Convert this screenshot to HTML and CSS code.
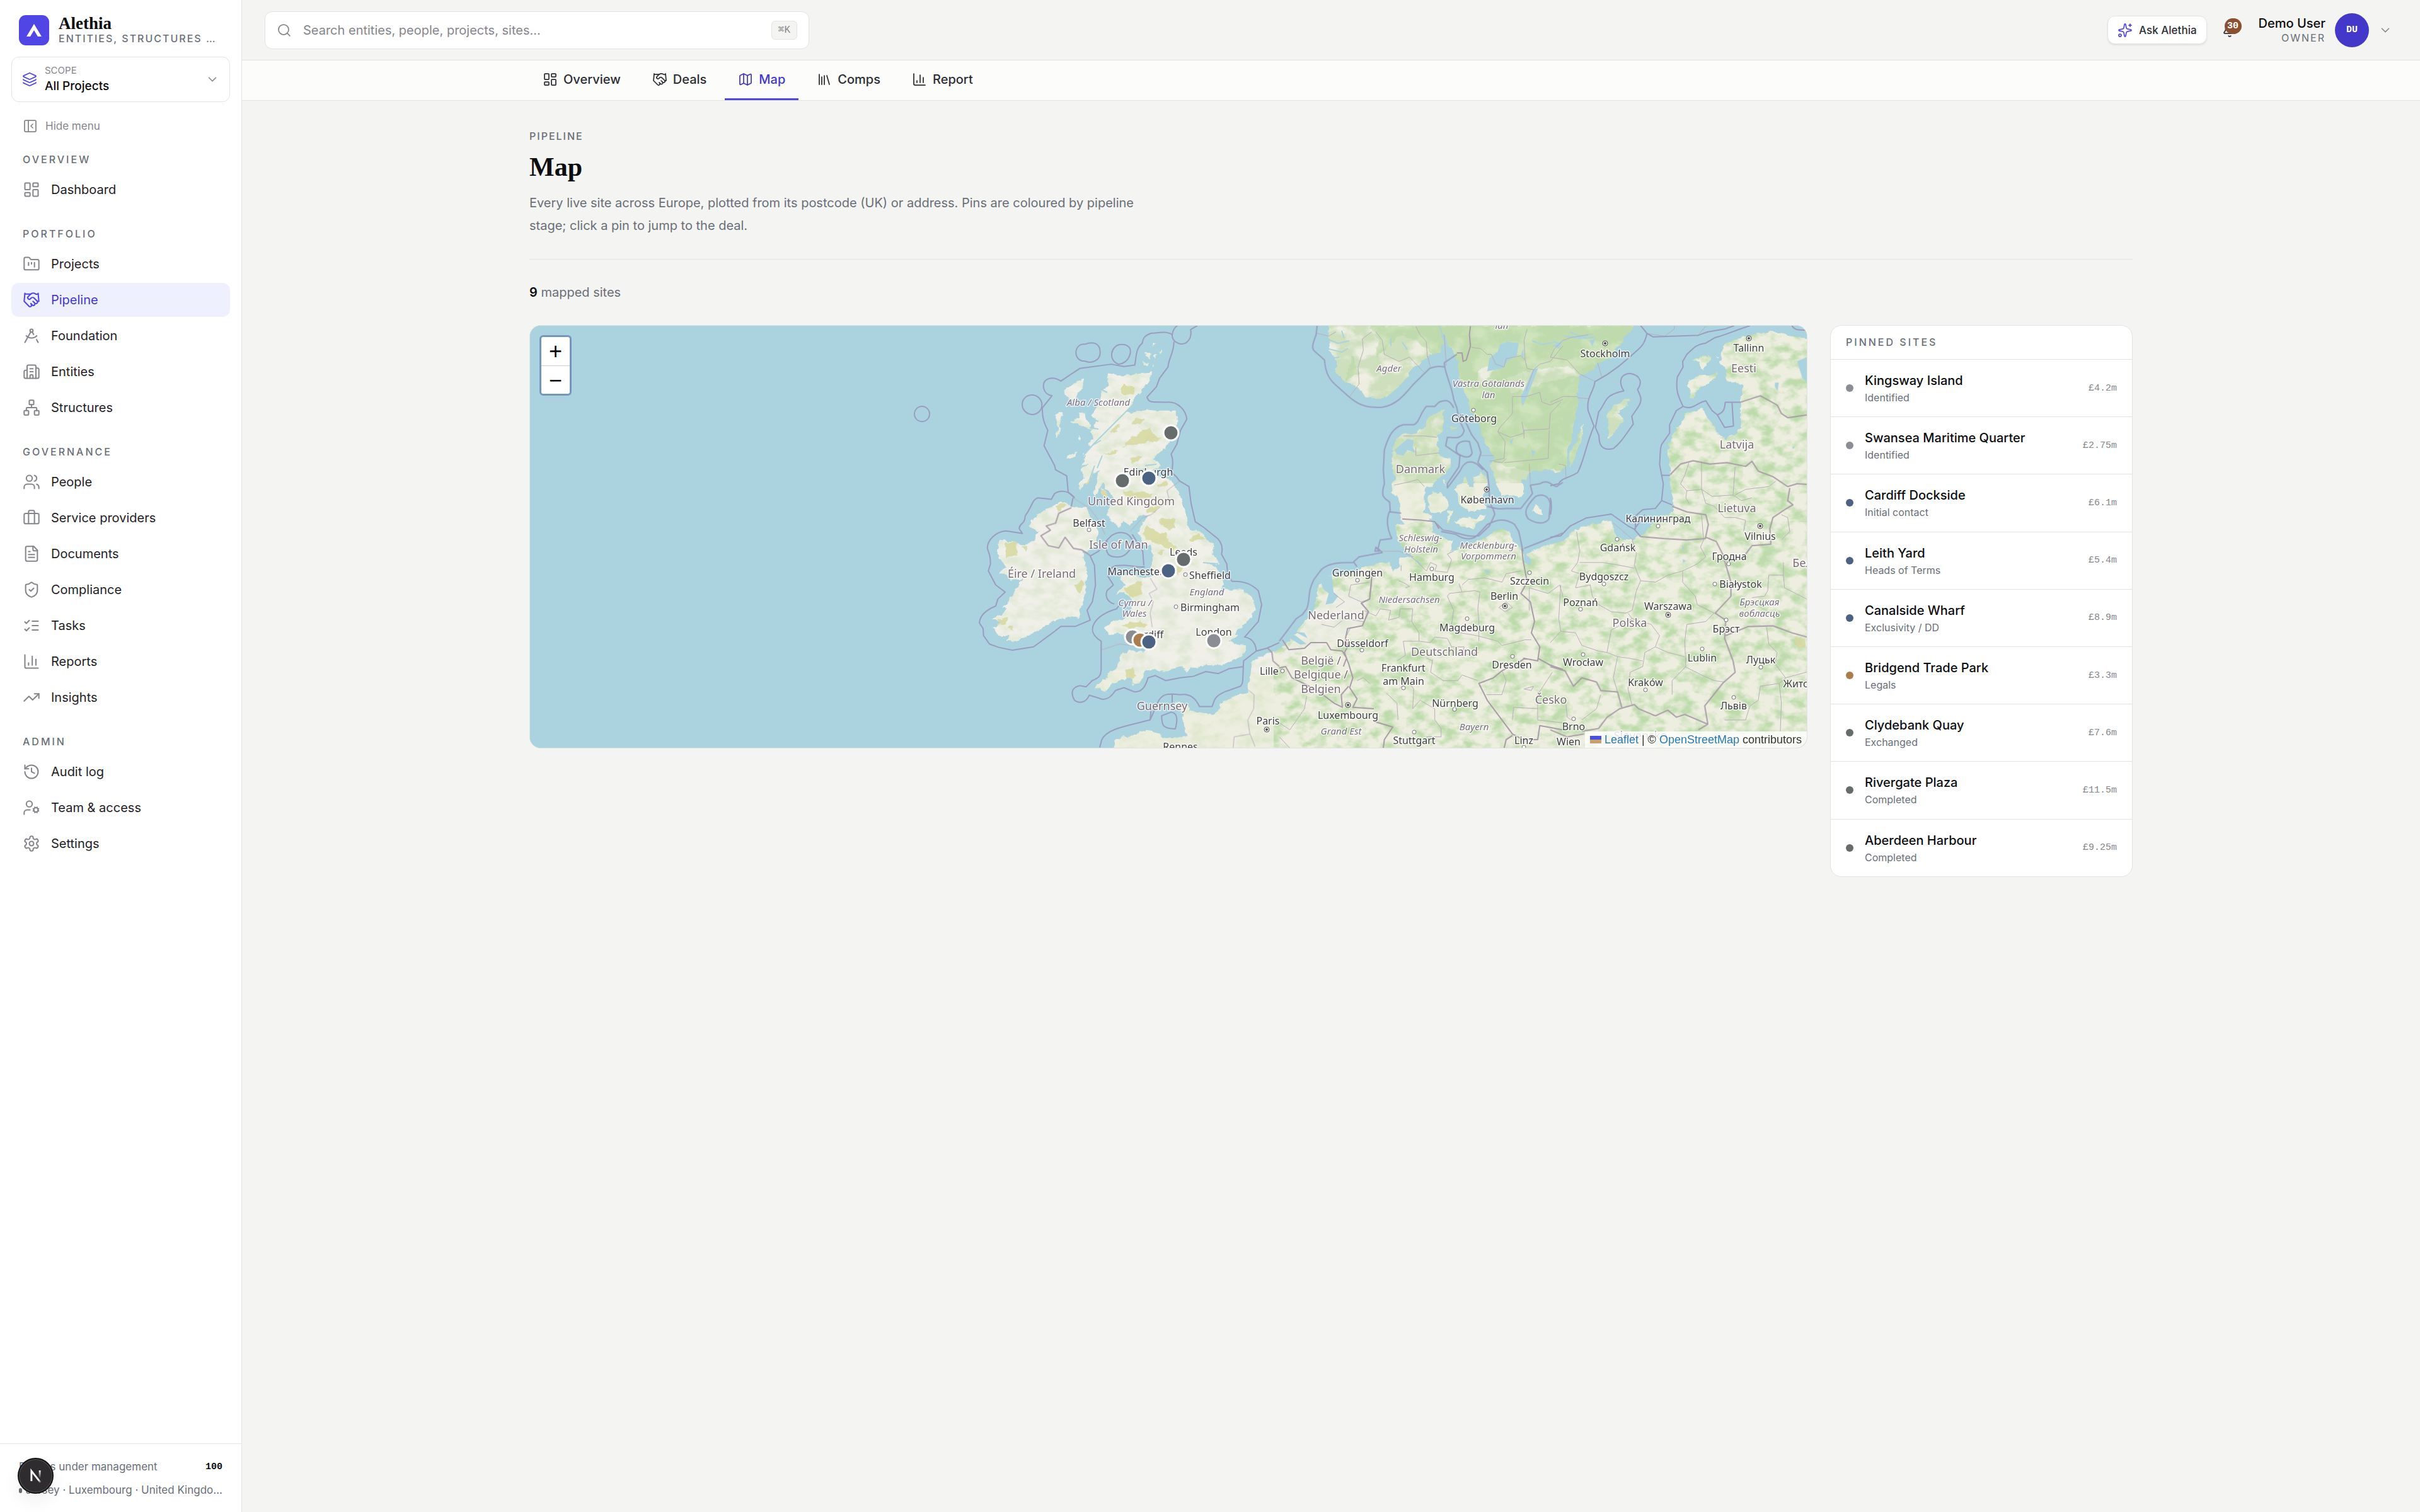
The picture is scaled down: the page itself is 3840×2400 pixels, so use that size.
FILE: index.html
```html
<!DOCTYPE html>
<html lang="en">
<head>
  <meta charset="UTF-8">
  <meta name="viewport" content="width=device-width, initial-scale=1">
  <title>Alethia</title>
  <link rel="stylesheet" href="styles.css">
</head>
<body>
  <!-- icon sprite -->
  <svg class="sprite" aria-hidden="true">
    <symbol id="i-dashboard" viewBox="0 0 24 24"><rect width="7" height="9" x="3" y="3" rx="1"/><rect width="7" height="5" x="14" y="3" rx="1"/><rect width="7" height="9" x="14" y="12" rx="1"/><rect width="7" height="5" x="3" y="16" rx="1"/></symbol>
    <symbol id="i-folder" viewBox="0 0 24 24"><path d="M4 20h16a2 2 0 0 0 2-2V8a2 2 0 0 0-2-2h-7.93a2 2 0 0 1-1.66-.9l-.82-1.2A2 2 0 0 0 7.93 3H4a2 2 0 0 0-2 2v13c0 1.1.9 2 2 2Z"/><path d="M8 10v4M12 10v2M16 10v6"/></symbol>
    <symbol id="i-handshake" viewBox="0 0 24 24"><path d="m11 17 2 2a1 1 0 1 0 3-3"/><path d="m14 14 2.5 2.5a1 1 0 1 0 3-3l-3.88-3.88a3 3 0 0 0-4.24 0l-.88.88a1 1 0 1 1-3-3l2.81-2.81a5.79 5.79 0 0 1 7.06-.87l.47.28a2 2 0 0 0 1.42.25L21 4"/><path d="m21 3 1 11h-2"/><path d="M3 3 2 14l6.5 6.5a1 1 0 1 0 3-3"/><path d="M3 4h8"/></symbol>
    <symbol id="i-compass" viewBox="0 0 24 24"><path d="m12.99 6.74 1.93 3.44"/><path d="M19.136 12a10 10 0 0 1-14.271 0"/><path d="m21 21-2.16-3.84"/><path d="m3 21 8.02-14.26"/><circle cx="12" cy="5" r="2"/></symbol>
    <symbol id="i-building" viewBox="0 0 24 24"><path d="M10 12h4M10 8h4"/><path d="M14 21v-3a2 2 0 0 0-4 0v3"/><path d="M6 10H4a2 2 0 0 0-2 2v7a2 2 0 0 0 2 2h16a2 2 0 0 0 2-2V9a2 2 0 0 0-2-2h-2"/><path d="M6 21V5a2 2 0 0 1 2-2h8a2 2 0 0 1 2 2v16"/></symbol>
    <symbol id="i-network" viewBox="0 0 24 24"><rect x="16" y="16" width="6" height="6" rx="1"/><rect x="2" y="16" width="6" height="6" rx="1"/><rect x="9" y="2" width="6" height="6" rx="1"/><path d="M5 16v-3a1 1 0 0 1 1-1h12a1 1 0 0 1 1 1v3M12 12V8"/></symbol>
    <symbol id="i-users" viewBox="0 0 24 24"><path d="M16 21v-2a4 4 0 0 0-4-4H6a4 4 0 0 0-4 4v2"/><path d="M16 3.128a4 4 0 0 1 0 7.744"/><path d="M22 21v-2a4 4 0 0 0-3-3.87"/><circle cx="9" cy="7" r="4"/></symbol>
    <symbol id="i-briefcase" viewBox="0 0 24 24"><path d="M16 20V4a2 2 0 0 0-2-2h-4a2 2 0 0 0-2 2v16"/><rect width="20" height="14" x="2" y="6" rx="2"/></symbol>
    <symbol id="i-file" viewBox="0 0 24 24"><path d="M15 2H6a2 2 0 0 0-2 2v16a2 2 0 0 0 2 2h12a2 2 0 0 0 2-2V7Z"/><path d="M14 2v4a2 2 0 0 0 2 2h4"/><path d="M10 9H8M16 13H8M16 17H8"/></symbol>
    <symbol id="i-shield" viewBox="0 0 24 24"><path d="M20 13c0 5-3.5 7.5-7.66 8.95a1 1 0 0 1-.67-.01C7.5 20.5 4 18 4 13V6a1 1 0 0 1 1-1c2 0 4.5-1.2 6.24-2.72a1.17 1.17 0 0 1 1.52 0C14.51 3.81 17 5 19 5a1 1 0 0 1 1 1z"/><path d="m9 12 2 2 4-4"/></symbol>
    <symbol id="i-tasks" viewBox="0 0 24 24"><path d="m3 17 2 2 4-4M3 7l2 2 4-4M13 6h8M13 12h8M13 18h8"/></symbol>
    <symbol id="i-chart" viewBox="0 0 24 24"><path d="M3 3v16a2 2 0 0 0 2 2h16M18 17V9M13 17V5M8 17v-3"/></symbol>
    <symbol id="i-trend" viewBox="0 0 24 24"><path d="M16 7h6v6"/><path d="m22 7-8.5 8.5-5-5L2 17"/></symbol>
    <symbol id="i-history" viewBox="0 0 24 24"><path d="M3 12a9 9 0 1 0 9-9 9.75 9.75 0 0 0-6.74 2.74L3 8"/><path d="M3 3v5h5M12 7v5l4 2"/></symbol>
    <symbol id="i-usercog" viewBox="0 0 24 24"><path d="M10 15H6a4 4 0 0 0-4 4v2"/><path d="m14.305 16.53.923-.382M15.228 13.852l-.923-.383M16.852 12.228l-.383-.923M16.852 17.772l-.383.924M19.148 12.228l.383-.923M19.53 18.696l-.382-.924M20.772 13.852l.924-.383M20.772 16.148l.924.383"/><circle cx="18" cy="15" r="3"/><circle cx="9" cy="7" r="4"/></symbol>
    <symbol id="i-settings" viewBox="0 0 24 24"><path d="M12.22 2h-.44a2 2 0 0 0-2 2v.18a2 2 0 0 1-1 1.73l-.43.25a2 2 0 0 1-2 0l-.15-.08a2 2 0 0 0-2.73.73l-.22.38a2 2 0 0 0 .73 2.73l.15.1a2 2 0 0 1 1 1.72v.51a2 2 0 0 1-1 1.74l-.15.09a2 2 0 0 0-.73 2.73l.22.38a2 2 0 0 0 2.73.73l.15-.08a2 2 0 0 1 2 0l.43.25a2 2 0 0 1 1 1.73V20a2 2 0 0 0 2 2h.44a2 2 0 0 0 2-2v-.18a2 2 0 0 1 1-1.73l.43-.25a2 2 0 0 1 2 0l.15.08a2 2 0 0 0 2.73-.73l.22-.39a2 2 0 0 0-.73-2.73l-.15-.08a2 2 0 0 1-1-1.74v-.5a2 2 0 0 1 1-1.74l.15-.09a2 2 0 0 0 .73-2.73l-.22-.38a2 2 0 0 0-2.73-.73l-.15.08a2 2 0 0 1-2 0l-.43-.25a2 2 0 0 1-1-1.73V4a2 2 0 0 0-2-2z"/><circle cx="12" cy="12" r="3"/></symbol>
    <symbol id="i-layers" viewBox="0 0 24 24"><path d="M12.83 2.18a2 2 0 0 0-1.66 0L2.6 6.08a1 1 0 0 0 0 1.83l8.58 3.91a2 2 0 0 0 1.66 0l8.58-3.9a1 1 0 0 0 0-1.83z"/><path d="M2 12a1 1 0 0 0 .58.91l8.6 3.91a2 2 0 0 0 1.65 0l8.58-3.9A1 1 0 0 0 22 12"/><path d="M2 17a1 1 0 0 0 .58.91l8.6 3.91a2 2 0 0 0 1.65 0l8.58-3.9A1 1 0 0 0 22 17"/></symbol>
    <symbol id="i-panel" viewBox="0 0 24 24"><rect width="18" height="18" x="3" y="3" rx="2"/><path d="M9 3v18M16 15l-3-3 3-3"/></symbol>
    <symbol id="i-map" viewBox="0 0 24 24"><path d="M14.106 5.553a2 2 0 0 0 1.788 0l3.659-1.83A1 1 0 0 1 21 4.619v12.764a1 1 0 0 1-.553.894l-4.553 2.277a2 2 0 0 1-1.788 0l-4.212-2.106a2 2 0 0 0-1.788 0l-3.659 1.83A1 1 0 0 1 3 19.381V6.618a1 1 0 0 1 .553-.894l4.553-2.277a2 2 0 0 1 1.788 0z"/><path d="M15 5.764v15M9 3.236v15"/></symbol>
    <symbol id="i-library" viewBox="0 0 24 24"><path d="m16 6 4 14M12 6v14M8 8v12M4 4v16"/></symbol>
    <symbol id="i-search" viewBox="0 0 24 24"><path d="m21 21-4.34-4.34"/><circle cx="11" cy="11" r="8"/></symbol>
    <symbol id="i-sparkles" viewBox="0 0 24 24"><path d="M11.017 2.814a1 1 0 0 1 1.966 0l1.051 5.558a2 2 0 0 0 1.594 1.594l5.558 1.051a1 1 0 0 1 0 1.966l-5.558 1.051a2 2 0 0 0-1.594 1.594l-1.051 5.558a1 1 0 0 1-1.966 0l-1.051-5.558a2 2 0 0 0-1.594-1.594l-5.558-1.051a1 1 0 0 1 0-1.966l5.558-1.051a2 2 0 0 0 1.594-1.594z"/><path d="M20 2v4M22 4h-4"/><circle cx="4" cy="20" r="2"/></symbol>
    <symbol id="i-bell" viewBox="0 0 24 24"><path d="M10.268 21a2 2 0 0 0 3.464 0"/><path d="M3.262 15.326A1 1 0 0 0 4 17h16a1 1 0 0 0 .74-1.673C19.41 13.956 18 12.499 18 8A6 6 0 0 0 6 8c0 4.499-1.411 5.956-2.738 7.326"/></symbol>
    <symbol id="i-chevron" viewBox="0 0 24 24"><path d="m6 9 6 6 6-6"/></symbol>
  </svg>

  <div class="layout">
    <aside class="sidebar">
      <div class="brand">
        <svg class="brand-logo" viewBox="0 0 48 48"><rect width="48" height="48" rx="11"/><path d="M24 14 36 34h-6l-6-10-6 10h-6z"/></svg>
        <div class="brand-text">
          <div class="brand-name">Alethia</div>
          <div class="brand-sub">Entities, structures …</div>
        </div>
      </div>

      <button class="scope">
        <svg class="icon"><use href="#i-layers"/></svg>
        <span class="scope-text">
          <span class="scope-label">SCOPE</span>
          <span class="scope-value">All Projects</span>
        </span>
        <svg class="icon icon-sm"><use href="#i-chevron"/></svg>
      </button>

      <button class="hide-menu"><svg class="icon"><use href="#i-panel"/></svg>Hide menu</button>

      <nav class="nav">
        <section class="nav-group">
          <h2>Overview</h2>
          <a href="#"><svg class="icon"><use href="#i-dashboard"/></svg>Dashboard</a>
        </section>
        <section class="nav-group">
          <h2>Portfolio</h2>
          <a href="#"><svg class="icon"><use href="#i-folder"/></svg>Projects</a>
          <a href="#" class="active"><svg class="icon"><use href="#i-handshake"/></svg>Pipeline</a>
          <a href="#"><svg class="icon"><use href="#i-compass"/></svg>Foundation</a>
          <a href="#"><svg class="icon"><use href="#i-building"/></svg>Entities</a>
          <a href="#"><svg class="icon"><use href="#i-network"/></svg>Structures</a>
        </section>
        <section class="nav-group">
          <h2>Governance</h2>
          <a href="#"><svg class="icon"><use href="#i-users"/></svg>People</a>
          <a href="#"><svg class="icon"><use href="#i-briefcase"/></svg>Service providers</a>
          <a href="#"><svg class="icon"><use href="#i-file"/></svg>Documents</a>
          <a href="#"><svg class="icon"><use href="#i-shield"/></svg>Compliance</a>
          <a href="#"><svg class="icon"><use href="#i-tasks"/></svg>Tasks</a>
          <a href="#"><svg class="icon"><use href="#i-chart"/></svg>Reports</a>
          <a href="#"><svg class="icon"><use href="#i-trend"/></svg>Insights</a>
        </section>
        <section class="nav-group">
          <h2>Admin</h2>
          <a href="#"><svg class="icon"><use href="#i-history"/></svg>Audit log</a>
          <a href="#"><svg class="icon"><use href="#i-usercog"/></svg>Team &amp; access</a>
          <a href="#"><svg class="icon"><use href="#i-settings"/></svg>Settings</a>
        </section>
      </nav>

      <footer class="side-footer">
        <div class="stat"><span>Entities under management</span><b>100</b></div>
        <div class="places"><i></i>Jersey · Luxembourg · United Kingdo…</div>
      </footer>
    </aside>

    <div class="content">
      <header class="topbar">
        <label class="search">
          <svg class="icon"><use href="#i-search"/></svg>
          <input type="text" placeholder="Search entities, people, projects, sites…">
          <kbd>⌘K</kbd>
        </label>
        <div class="top-right">
          <button class="ask"><svg class="icon"><use href="#i-sparkles"/></svg>Ask Alethia</button>
          <button class="bell"><svg class="icon"><use href="#i-bell"/></svg><span class="count">30</span></button>
          <button class="account">
            <span class="who"><span class="who-name">Demo User</span><span class="who-role">OWNER</span></span>
            <span class="avatar">DU</span>
            <svg class="icon icon-sm"><use href="#i-chevron"/></svg>
          </button>
        </div>
      </header>

      <nav class="tabs">
        <div class="tabs-inner">
          <a href="#"><svg class="icon"><use href="#i-dashboard"/></svg>Overview</a>
          <a href="#"><svg class="icon"><use href="#i-handshake"/></svg>Deals</a>
          <a href="#" class="active"><svg class="icon"><use href="#i-map"/></svg>Map</a>
          <a href="#"><svg class="icon"><use href="#i-library"/></svg>Comps</a>
          <a href="#"><svg class="icon"><use href="#i-chart"/></svg>Report</a>
        </div>
      </nav>

      <main class="page">
        <div class="page-head">
          <p class="eyebrow">Pipeline</p>
          <h1>Map</h1>
          <p class="lead">Every live site across Europe, plotted from its postcode (UK) or address. Pins are coloured by pipeline stage; click a pin to jump to the deal.</p>
        </div>
        <p class="mapped"><b>9</b> mapped sites</p>

        <div class="board">
          <div class="map">
            <svg class="map-canvas" viewBox="0 0 2026 670" preserveAspectRatio="xMinYMin slice">
              <defs>
                <!-- woodland mottling -->
                <filter id="wood" x="0" y="0" width="100%" height="100%" color-interpolation-filters="sRGB">
                  <feTurbulence type="fractalNoise" baseFrequency="0.04 0.06" numOctaves="5" seed="8"/>
                  <feColorMatrix values="0 0 0 0 .74  0 0 0 0 .86  0 0 0 0 .67  0 3 0 0 -1.2"/>
                </filter>
                <filter id="wood-dense" x="0" y="0" width="100%" height="100%" color-interpolation-filters="sRGB">
                  <feTurbulence type="fractalNoise" baseFrequency="0.03 0.04" numOctaves="5" seed="3"/>
                  <feColorMatrix values="0 0 0 0 .70  0 0 0 0 .83  0 0 0 0 .62  0 4 0 0 -1.2"/>
                </filter>
                <!-- coast wobble -->
                <filter id="rough" x="0" y="0" width="100%" height="100%">
                  <feTurbulence type="fractalNoise" baseFrequency="0.09" numOctaves="3" seed="5"/>
                  <feDisplacementMap in="SourceGraphic" scale="9" xChannelSelector="R" yChannelSelector="G"/>
                </filter>

                <g id="isles" transform="matrix(.3333 0 0 .4464 689 -17)">
                  <path d="M690 207 735 215 790 215 830 207 888 203 885 232 850 262 815 292 800 318 770 345 800 350 870 337 940 342 1005 342 1018 365 1005 400 985 440 955 475 915 500 895 515 915 522 940 535 925 550 880 548 800 545 880 560 930 575 985 585 1020 630 1040 665 1055 720 1075 762 1130 775 1180 815 1190 835 1185 855 1212 887 1150 880 1200 895 1230 925 1238 955 1215 985 1180 1000 1250 978 1320 978 1370 1000 1382 1040 1360 1085 1310 1115 1280 1135 1305 1140 1260 1160 1300 1170 1345 1175 1340 1200 1290 1225 1230 1245 1130 1250 1085 1255 1060 1270 1040 1250 950 1265 900 1260 865 1262 840 1305 810 1315 790 1295 750 1295 700 1315 670 1340 640 1330 620 1325 660 1300 700 1270 730 1250 745 1215 775 1195 850 1195 880 1170 850 1175 800 1165 760 1135 735 1130 690 1140 662 1112 690 1095 760 1080 790 1050 800 1015 760 990 718 993 770 960 745 945 740 925 800 925 880 935 900 925 890 890 900 860 885 825 850 815 833 775 850 735 885 715 830 715 790 745 755 735 735 755 705 740 680 715 690 690 720 660 700 640 665 600 640 620 625 650 615 640 630 590 650 545 610 570 550 625 540 605 570 580 555 545 600 530 555 535 580 505 560 500 600 470 585 455 620 440 600 415 620 395 620 370 600 350 640 320 650 290 665 265 690 255 675 235Z"/>
                  <path d="M565 225 570 250 540 285 520 305 490 300 475 265 510 250ZM470 345 455 390 460 420 440 435 445 390 432 350ZM545 345 575 355 610 405 570 400 510 375 545 365ZM545 430 562 436 555 447ZM540 485 520 505 488 512 510 492ZM585 560 610 562 590 600 572 590ZM650 615 672 618 675 645 655 640ZM862 130 890 135 885 158 865 150ZM852 165 875 168 870 182 855 176ZM900 145 915 140 912 155ZM893 98 905 105 898 112ZM925 130 942 125 935 140ZM895 170 905 175 898 186ZM735 800 755 795 745 815 728 822Z"/>
                  <path d="M455 665 500 680 580 685 600 720 640 770 635 800 600 835 560 840 575 880 585 930 582 985 555 1045 550 1075 490 1070 440 1085 380 1110 300 1140 240 1160 200 1158 215 1140 165 1140 135 1115 175 1095 130 1080 180 1065 205 1045 175 1045 215 1020 240 980 275 945 225 940 200 925 165 920 195 895 170 870 158 845 165 805 230 800 280 820 330 800 355 770 305 750 340 715 390 690Z"/>
                  <path d="M1530 1185 1440 1205 1370 1230 1360 1300 1345 1340 1280 1355 1215 1385 1220 1405 1180 1420 1110 1415 1075 1410 1070 1385 1010 1378 1040 1420 1050 1480 1060 1500 1000 1500 960 1505 930 1490 870 1475 800 1490 715 1515 715 1580 1530 1580Z"/>
                </g>
                <g id="west" transform="matrix(.3333 0 0 .4464 1189 -17)">
                  <path d="M-30 1200 45 1165 50 1150 110 1100 150 1065 175 1030 185 960 230 935 250 925 300 920 350 915 400 900 450 885 520 880 545 910 570 890 575 860 640 865 600 835 560 800 550 745 590 740 575 700 570 650 530 630 550 580 535 530 540 480 560 440 590 420 650 420 700 385 720 355 765 345 790 335 775 360 780 410 750 435 760 490 780 505 820 515 810 540 780 570 750 580 730 610 700 610 690 640 695 690 685 700 725 735 730 770 800 800 830 800 810 845 870 815 920 810 980 790 1060 760 1100 775 1110 800 1150 830 1165 850 1250 825 1360 803 1360 1580-30 1580Z"/>
                  <path d="M705 650 735 632 770 630 800 655 805 690 770 708 730 700 710 680ZM835 620 865 600 890 580 905 610 925 610 920 575 960 560 985 575 990 610 970 650 980 690 940 690 925 700 890 690 870 680 850 660ZM830 735 880 720 930 725 955 710 985 715 950 735 925 760 900 755 860 750ZM1210 675 1250 690 1245 712 1210 700ZM805 700 822 695 812 735 798 740ZM690 702 725 715 728 725 700 722ZM815 400 845 395 835 405 820 408ZM780 585 792 590 788 608Z"/>
                </g>
                <g id="nordic-west" transform="matrix(.3333 0 0 .4464 1189 -17)">
                  <path d="M232 20 240 120 270 155 270 200 300 230 380 265 410 290 480 295 530 280 580 245 640 190 700 150 765 130 780 100 775 70 790 70 800 110 830 135 850 165 855 210 890 290 915 340 940 380 975 440 1000 480 1025 510 1000 540 1020 570 1045 620 1060 640 1140 650 1165 635 1160 590 1200 555 1260 550 1320 560 1370 540 1370 20Z"/>
                </g>
                <g id="east" transform="matrix(.3333 0 0 .4464 1619 -17)">
                  <path d="M-10 820 60 805 120 765 200 740 290 732 305 770 320 795 390 800 440 780 470 760 500 735 490 720 560 710 585 690 585 650 570 610 570 560 560 500 570 450 605 400 650 350 720 333 750 365 780 400 830 440 880 425 908 400 905 310 920 250 880 240 840 235 835 190 810 170 820 110 870 90 960 70 1040 60 1110 65 1170 80 1290 85 1290 1580-10 1580Z"/>
                </g>
                <g id="nordic-east" transform="matrix(.3333 0 0 .4464 1619 -17)">
                  <path d="M-10 20 410 20 370 70 330 100 290 150 230 175 190 200 140 215 130 260 135 310 115 370 100 460 60 520 40 560 0 545-10 550ZM160 390 150 430 115 510 95 545 92 500 125 440ZM388 297 360 320 330 345 345 375 325 400 270 448 280 400 268 360 310 315ZM650 250 690 215 760 215 800 205 790 225 740 250 700 265 680 300 665 300 675 270ZM675 160 710 155 730 138 765 155 755 175 720 195 710 170ZM785 145 805 148 795 152Z"/>
                </g>
                <mask id="land-mask"><g fill="#fff" filter="url(#rough)"><use href="#isles"/><use href="#west"/><use href="#east"/><use href="#nordic-west"/><use href="#nordic-east"/></g></mask>
              </defs>

              <rect class="sea" width="4000" height="1400"/>
              <g mask="url(#land-mask)">
                <rect class="land" width="2026" height="670"/>
                <rect class="pasture" x="700" width="480" height="550"/>
                <rect x="700" width="480" height="670" filter="url(#wood)" opacity=".3"/>
                <rect x="1180" y="310" width="846" height="360" filter="url(#wood)"/>
                <rect x="1360" y="140" width="140" height="170" filter="url(#wood)" opacity=".3"/>
                <rect x="1790" width="236" height="312" filter="url(#wood)"/>
                <g filter="url(#rough)">
                  <path class="forest" d="M1310 0h460l-40 60-50 25-10 60-10 70-20 15h-60l-60-15-40-40-40-70-10-60-20-20-30-10-50 50-60 40-20-20z"/>
                  <path class="fell" d="M1262 0h70l14 20-6 56-22 10-14-40-10 46-22 20-16-40zM1548 84l40-14 60-6 20 14-50 10-60 20zM1505 70l26-10-8 20-18 14z"/>
                  <path class="farmland" d="M1270 420h60l-10 60-70 30-60 20z"/>
                </g>
                <rect x="1240" width="550" height="250" filter="url(#wood-dense)" opacity=".55"/>
                <!-- upland heath -->
                <g class="heath" filter="url(#rough)">
                  <g transform="translate(819 63) scale(.3333)">
                    <path d="M350 115 375 90 415 105 415 135 380 145 355 130ZM405 280 440 250 465 260 430 290ZM370 385 400 345 450 320 490 290 520 330 550 350 480 365 430 375ZM300 320 350 280 350 300 310 325ZM275 420 345 400 330 420ZM365 605 440 600 510 610 505 630 420 630 380 620ZM525 570 570 545 575 570 530 580ZM455 800 480 765 510 780 540 800 570 790 580 840 635 870 600 880 540 850 500 840ZM535 730 610 730 620 770 580 780 550 760ZM680 830 720 800 760 825 700 835ZM535 885 565 880 550 905ZM260 590 285 590 285 625 262 625ZM190 560 225 510 215 545 200 570ZM370 1060 450 1030 460 1090 400 1110ZM135 1050 170 1020 190 1040 160 1080ZM400 440 460 430 440 460 400 470ZM480 680 540 670 520 700 480 700ZM45 670 75 660 95 670 60 690ZM620 950 650 970 630 1000Z"/>
                  </g>
                  <path d="M755 344l20-4-4 24-16 4zM781 352l10-4-4 12zM944 548l14-6 4 14-12 8zM940 474l30-6 10 8-30 6zM742 466l18-4-4 12-14 2zM756 480l10-4 2 10zM2006 494l18 4-2 14-12-2z"/>
                </g>
              </g>

              <!-- lochs and fjords -->
              <g class="loch">
                <path d="M958 124 940 142 918 164 896 186 878 206M906 182l-14 8M886 146l16 6M888 162l14 2M895 118l14 4M896 222l-8 22M908 206l-8 20M900 98l16 8M976 222l18-2M1068 376l24 2"/>
                <path d="M1262 20l20 8 18-4M1264 36l24 6 10-6M1270 52l14-2M1288 8l4 12M1448 14l-6-16M1366 20v12M1384 26l8 12M1590 24l16 6 20-4 10 4M1650 10l24 10 16-2"/>
              </g>

              <!-- lakes and inland water -->
              <g class="water" transform="matrix(.3333 0 0 .4464 1189 -17)">
                <path d="M195 945 250 925 258 985 280 1000 255 1025 220 1030 235 990 210 975ZM1050 105 1085 95 1140 100 1130 145 1085 165 1060 190 990 200 1000 155 1040 130ZM1210 190 1232 190 1180 290 1158 325 1150 290 1175 250ZM548 480 580 460 610 440 640 445 635 470 650 490 610 480 590 500 560 495Z"/>
                <path d="M60 1130 130 1170 100 1172 50 1150ZM70 1125 135 1150 120 1130ZM820 840 840 815 850 835ZM1165 845 1200 870 1195 890 1165 880ZM650 865 680 890 662 885ZM1095 450 1115 435 1105 460ZM1200 480 1220 485 1205 505ZM895 580 910 600 930 590 920 610 905 612ZM1150 145 1160 120 1165 150ZM1260 300 1275 295 1270 305ZM975 905 1005 912 990 922Z"/>
              </g>
              <g class="water" transform="matrix(.3333 0 0 .4464 1619 -17)">
                <path d="M1175 165 1225 148 1225 240 1200 225ZM1070 240 1088 240 1082 270 1068 255ZM60 72 130 78 200 66 150 85 80 80ZM10 110 60 90 40 118ZM185 90 215 85 200 110ZM625 820 640 825 632 838ZM630 868 645 874 632 882ZM1150 470 1165 466 1158 476ZM920 745 930 765 922 760Z"/>
              </g>

              <!-- regional boundaries -->
              <g class="region" transform="matrix(.3333 0 0 .4464 689 -17)">
                <path d="M885 935 918 975 880 990 900 1020 885 1060 895 1110M655 1190 740 1170 850 1180M520 650 600 690 640 730 670 780M1025 590 965 625 975 655 890 710 850 720 790 770M1355 1335 1380 1350 1378 1400 1350 1440 1360 1490 1285 1500 1280 1540M1360 1490 1385 1535"/>
              </g>
              <g class="region" transform="matrix(.3333 0 0 .4464 1189 -17)">
                <path d="M180 65 235 75 270 60M335 290 380 245 375 185 400 125 395 85 440 60M460 60 490 90 500 140 570 165 620 150 690 205M705 145 720 185M705 150 700 95 670 70 650 40M785 70 795 180M915 115 960 120 990 140 1010 140 1030 175 1070 185 1080 155 1150 145 1170 160 1180 190 1210 195 1240 175 1290 165 1350 110M1170 160 1165 90 1180 50M1210 195 1175 270M1175 290 1110 290 1110 350 1050 400 1040 415 1100 435 1165 420 1155 380M1175 290 1240 275 1250 310 1290 320 1350 300M1040 415 1075 450 1070 510 1000 520M1165 440 1165 410 1285 405 1290 350 1340 310M1285 410 1280 510 1070 525M1190 530 1195 600M960 500 1020 500M1020 520 1060 525 1080 510"/>
                <path d="M545 605 610 595 660 585 690 610M590 430 690 430 750 435M650 470 650 500 760 490M485 840 570 840 640 860M630 860 660 880 700 910 720 880 750 890 740 910 800 915 820 870 800 850 830 840M580 890 580 910M570 945 600 955 620 965 600 970M440 900 440 960 430 1010 390 1020 420 1050 400 1100M390 1020 330 1000 340 960 430 950M400 1050 460 1070 480 1045 530 1050 520 1085 570 1075 575 1045 635 1045 630 1090 665 1130 665 1160M665 1160 590 1160 600 1210 560 1230M665 1160 720 1165 740 1145 800 1150 820 1180 880 1180 870 1210 950 1200M950 1160 950 1090 945 1045 955 985 930 980 870 985 810 990 800 1000 830 1050 820 1100 860 1130 940 1140 1040 1160 1060 1175 1170 1155 1200 1155M870 960 900 940 980 935 1060 950 1080 920 1150 910M870 985 855 955M1045 1040 1080 1020 1110 1040 1075 1055ZM730 1225 720 1270 780 1300 850 1300 870 1280 945 1300M730 1230 700 1220M635 1400 640 1330 610 1300 570 1330M635 1400 670 1370 740 1400 740 1440 770 1470 770 1500 700 1500M565 1440 560 1380 510 1345M0 1450 50 1475 120 1400 130 1355M0 1500 50 1540M430 1310 400 1290 370 1300M260 990 310 1020 270 1040M200 1100 260 1110 310 1080 400 1090M340 1110 320 1140M1190 1050 1190 970 1280 990 1335 960 1350 1000M1165 1330 1210 1320 1200 1335ZM985 1350 1060 1350 1080 1300 1060 1265M1110 1440 1115 1395 1230 1400 1230 1350 1300 1270M1230 1400 1230 1440 1350 1450"/>
              </g>
              <g class="region" transform="matrix(.3333 0 0 .4464 1619 -17)">
                <path d="M0 150 80 160 140 210 210 235M130 295 185 297M0 310 60 290 130 290M40 530 72 535 75 585M225 170 245 220M455 65 545 75 590 50 590 40M700 75 740 40M0 150 20 120 60 90 100 80 180 70M660 525 640 570 620 600 650 625 720 620 720 520M720 620 770 645 870 640 880 540M870 640 910 660 960 650M880 640 930 620 1040 610 1075 590M650 625 645 650 660 670M720 620 740 670 780 680 830 720 880 720 930 730 920 770M1100 710 1130 720 1140 770 1100 800M720 710 730 800 715 825 740 860 700 885 630 910 560 925 500 950 430 945 400 890 410 850 390 800M430 945 410 980 390 1050 360 1060 290 1055 230 1030 200 1000 190 960 120 970 140 920 100 910 130 880 140 840 125 770M140 880 250 880 330 890 400 900M630 910 630 950 690 1000 700 1030 780 1060 740 1090 650 1100 640 1160 645 1250 580 1300 580 1350M370 1060 390 1080 480 1100 520 1140 500 1180 450 1200 440 1250 380 1270 370 1330 390 1390M500 1180 560 1200 640 1215M640 1250 720 1280 780 1300 830 1305M390 1080 290 1120 270 1200 230 1195 150 1175 120 1130 50 1125 0 1165M50 960 40 1080 50 1125M270 1200 320 1215 300 1290 320 1340M320 1215 370 1220 440 1230M1035 980 1040 925 1110 925 1110 880M1035 980 1020 1000 960 1005M1110 925 1115 970 1220 1010M1030 1110 1040 1170 1080 1200 1070 1240 1120 1290 1090 1310 1100 1380 1095 1480M1120 1290 1220 1270M950 1390 990 1370 1000 1320 1090 1310M950 1390 930 1440 830 1440M240 1350 220 1400 150 1440M300 740 340 765 395 800M75 1385 80 1430 100 1440"/>
              </g>

              <!-- country boundaries -->
              <g class="country" transform="matrix(.3333 0 0 .4464 689 -17)">
                <path d="M510 685 450 705 435 740 390 750 410 765 365 785 400 820 450 828 480 790 520 830 560 835 600 855M1500 1250 1470 1230 1465 1200 1445 1185"/>
              </g>
              <g class="country" transform="matrix(.3333 0 0 .4464 1189 -17)">
                <path d="M910 40 905 70 910 110 890 160 875 165 870 135 845 135M585 725 680 730 740 735 760 760M15 1155 45 1190 120 1185 150 1165 225 1165 245 1190 300 1195 320 1220 305 1250M440 930 430 1010 390 1025 425 1055 395 1105 325 1115 315 1150 325 1180 310 1200 330 1240 350 1290 335 1325 370 1365 350 1395 450 1400M0 1255 30 1250 60 1290 130 1315 190 1340 260 1380 300 1395 295 1350 330 1320M450 1445 540 1465 500 1510 495 1540M1155 830 1160 870 1180 950 1150 990 1195 1020 1215 1090 1200 1130 1240 1180 1230 1230 1160 1220M1230 1220 1290 1245 1350 1260M1170 1220 1130 1240 1060 1265 1020 1290 950 1310 990 1370 1060 1440 1110 1490 1160 1510 1230 1510 1240 1460 1350 1475M1110 1495 1080 1510 1070 1540"/>
              </g>
              <g class="country" transform="matrix(.3333 0 0 .4464 1619 -17)">
                <path d="M905 310 1000 287 1080 320 1100 350 1130 365 1222 355M570 568 620 530 680 518 760 530 840 525 930 538 960 520 990 555 1060 575 1130 610 1175 600 1222 602M1140 615 1130 660 1155 675 1120 690 1060 720 1045 760 1050 815 960 820 930 850M580 680 650 700 740 710 752 745 738 795 650 800 540 795 430 788M740 790 790 805 820 850 840 900 860 950 860 1000 785 1060 835 1085 830 1150 870 1230 880 1270 820 1310 735 1390 750 1455 640 1420 600 1430 560 1405 500 1425 420 1400 400 1385 330 1400 270 1430 230 1470 150 1480M835 1140 940 1108 1060 1105 1150 1130 1222 1145M0 1250 70 1265 110 1320 150 1290 220 1305 240 1335 320 1340 340 1395M0 1475 80 1500 160 1490M750 1455 705 1475"/>
              </g>

              <!-- territorial waters -->
              <g class="marine" transform="matrix(.3333 0 0 .4464 689 -17)">
                <ellipse cx="-201" cy="352" rx="36" ry="27"/>
                <path d="M575 104C520 100 515 165 575 164 610 175 650 160 647 130 645 95 605 95 575 104ZM748 105C700 105 680 160 735 175 790 170 800 125 785 115 775 105 760 105 748 105ZM325 284C260 285 260 350 325 354 385 350 385 290 325 284Z"/>
                <path d="M1110 38 1078 52C1085 85 1060 105 1030 103 1000 98 990 85 990 70 960 55 920 65 890 65 850 75 850 90 848 100 815 120 820 150 812 178L760 183 700 175 550 190 460 235C420 215 370 225 378 260 385 280 400 285 418 287L372 330C370 370 385 390 398 410L380 465 430 535 435 550 488 572 495 630 525 650M990 70C995 50 1005 42 1015 38M998 95C1000 130 975 150 970 185L930 225 915 255 870 292C880 315 900 308 960 310 1020 305 1055 340 1060 370L1030 410 1012 460 985 495C1000 520 990 545 988 560L1010 575 1025 590 1070 610 1080 670 1100 735 1140 755 1190 785C1220 800 1235 820 1225 850L1250 885 1255 925 1275 947C1340 945 1370 960 1400 980L1416 1030 1400 1090 1335 1145C1380 1150 1390 1180 1390 1195L1330 1230C1325 1300 1330 1310 1315 1320L1240 1340C1180 1360 1190 1380 1180 1392H1120C1100 1360 1070 1345 1030 1350 970 1345 940 1345 920 1380L885 1440C780 1460 680 1470 655 1510L645 1538M1390 1195 1440 1185 1500 1165M1330 1250 1260 1258 1210 1275 1150 1268 1090 1285 1030 1290 960 1300 910 1282 875 1290C860 1330 840 1340 810 1340L760 1325 720 1335C690 1370 660 1370 640 1362L595 1352C580 1380 545 1382 525 1370 510 1350 505 1325 550 1318L580 1322 610 1300C640 1290 650 1285 652 1260L652 1160C610 1140 600 1120 620 1095 640 1070 680 1055 725 1045L745 1025"/>
                <path d="M525 650C500 625 460 620 430 635L415 655 350 650C320 660 325 680 290 715 290 745 260 740 262 760L277 777 200 768C150 770 110 800 110 830 120 850 125 860 125 885L115 910 150 960 195 985 160 1010 150 1035C100 1050 75 1070 72 1095L90 1115 92 1140 120 1170 165 1182 230 1192 330 1180 430 1125 460 1107 530 1107 600 1085 585 1050 610 1020 625 960 620 890 600 857 640 840 680 800 700 785C730 770 780 765 800 800 800 840 760 865 720 860 680 860 670 840 680 800M800 780 850 840 855 890M715 1028C680 1020 670 1000 680 980L710 960 685 930C690 890 720 890 760 890 800 890 825 900 860 895M510 680 518 650M990 1350V1380M885 1440 890 1400M940 1425C940 1460 945 1470 1005 1472 1020 1430 1010 1415 985 1412Z"/>
              </g>
              <g class="marine" transform="matrix(.3333 0 0 .4464 1189 -17)">
                <path d="M180 38 175 70C160 100 150 120 170 130L215 160C220 210 240 230 270 250L330 290C390 330 440 330 490 328 560 320 600 280 640 245L715 190C750 180 770 183 788 185L785 170 845 140M788 185C795 220 820 250 830 300L845 330 855 370 880 410C870 445 830 435 800 435L792 465 860 500 855 540 800 600V615L860 555C880 520 910 515 940 530L970 550M860 350 890 385 915 425 945 455 960 490 945 525 990 560C995 590 1000 600 1000 650 1000 680 1025 690 1025 710L1000 750 950 785C900 790 870 780 820 770L780 765 745 740M845 490C830 450 880 445 905 450L918 490C910 510 880 510 845 490M830 330C810 300 790 300 760 310L740 325 700 325C670 350 665 385 640 390L590 390C540 400 520 430 500 480L495 550 500 600C480 650 500 650 525 665L528 695C500 730 520 770 535 795L480 800 470 830 490 845 380 860 350 880C290 880 240 880 200 905L165 940C130 990 150 1010 130 1045L110 1065 80 1080 40 1120 0 1160M525 700 580 705M355 880 370 895M460 825 475 840 455 840ZM1165 830 1250 805 1350 775M990 680C1030 690 1050 690 1080 688L1150 688 1205 635 1195 605 1240 600C1280 580 1300 610 1320 610L1350 595M1220 645C1160 690 1170 710 1185 725 1240 750 1290 740 1285 710L1290 670C1280 640 1250 635 1220 645ZM1160 840 1140 770 1120 745C1060 715 1020 735 990 745L940 785C920 800 880 800 840 780L770 770"/>
              </g>
              <g class="marine" transform="matrix(.3333 0 0 .4464 1619 -17)">
                <path d="M430 38 460 65 490 78 705 72 750 60 830 50 875 38M460 65C450 110 420 120 385 145L330 180 270 212 212 237C210 270 170 290 180 340L208 395C170 460 160 520 130 560 90 580 50 580 40 600L0 607M380 208C330 210 325 240 350 270 250 285 270 310 230 345L215 400 232 430C230 480 270 480 300 475 340 450 350 435 395 388L388 360 420 325C440 300 430 290 415 265 440 240 430 215 380 208ZM950 38C860 60 820 75 785 80L740 100C690 105 680 120 650 140L630 165 632 185 605 220C595 270 610 290 632 325L600 340 568 390V420L530 460C520 480 525 500 520 530L530 570 538 600 530 660 500 688 440 692 405 715V762M632 325C680 340 700 310 740 305L770 340 795 355 830 400 872 395 865 310M795 355C830 345 830 330 833 310H905M530 570H570M530 660 580 675M0 790 50 785 95 750 170 722 290 708 370 750 400 762 430 788M400 762 450 710M1150 38C1170 60 1190 50 1222 55M0 650C8 670 5 700 0 710"/>
              </g>

              <!-- town dots -->
              <g class="town">
                <circle cx="887" cy="324" r="3"/><circle cx="1040" cy="395" r="3"/><circle cx="1025" cy="446" r="3"/><circle cx="1194" cy="548" r="3"/><circle cx="1497" cy="134" r="3"/><circle cx="1313" cy="404" r="3"/><circle cx="1431" cy="386" r="3"/><circle cx="1586" cy="392" r="3"/><circle cx="1487" cy="465" r="3"/><circle cx="1320" cy="515" r="3"/><circle cx="1386" cy="575" r="3"/><circle cx="1559" cy="525" r="3"/><circle cx="1467" cy="609" r="3"/><circle cx="1403" cy="645" r="3"/><circle cx="1577" cy="669" r="3"/><circle cx="1790" cy="318" r="3"/><circle cx="1725" cy="339" r="3"/><circle cx="1902" cy="378" r="3"/><circle cx="1704" cy="410" r="3"/><circle cx="1880" cy="410" r="3"/><circle cx="1667" cy="450" r="3"/><circle cx="1898" cy="467" r="3"/><circle cx="1671" cy="522" r="3"/><circle cx="1860" cy="513" r="3"/><circle cx="1953" cy="542" r="3"/><circle cx="1770" cy="578" r="3"/><circle cx="1910" cy="590" r="3"/><circle cx="1656" cy="624" r="3"/>
              </g>
              <g class="capital">
                <circle cx="1169" cy="641" r="4"/><circle cx="1518" cy="260" r="4"/><circle cx="1547" cy="445" r="4"/><circle cx="1298" cy="602" r="4"/><circle cx="1706" cy="28" r="4"/><circle cx="1934" cy="20" r="4"/><circle cx="1952" cy="318" r="4"/><circle cx="1806" cy="459" r="4"/>
              </g>
              <g class="capital-core">
                <circle cx="1169" cy="641" r="2"/><circle cx="1518" cy="260" r="2"/><circle cx="1547" cy="445" r="2"/><circle cx="1298" cy="602" r="2"/><circle cx="1706" cy="28" r="2"/><circle cx="1934" cy="20" r="2"/><circle cx="1952" cy="318" r="2"/><circle cx="1806" cy="459" r="2"/>
              </g>

              <g class="lbl lbl-region">
                <text x="902" y="127">Alba / Scotland</text><text x="1074" y="428">England</text><text x="960" y="445">Cymru /</text><text x="959" y="462">Wales</text><text x="1542" y="5">län</text><text x="1363" y="73">Agder</text><text x="1521" y="97">Västra Götalands</text><text x="1521" y="115">län</text><text x="1413" y="342">Schleswig-</text><text x="1414" y="360">Holstein</text><text x="1521" y="354">Mecklenburg-</text><text x="1521" y="371">Vorpommern</text><text x="1395" y="440">Niedersachsen</text><text x="1287" y="649">Grand Est</text><text x="1498" y="642">Bayern</text><text x="1951" y="444">Брэсцкая</text><text x="1951" y="462">вобласць</text>
              </g>
              <g class="lbl lbl-country">
                <text x="954" y="285">United Kingdom</text><text x="934" y="354">Isle of Man</text><text x="812" y="400">Éire / Ireland</text><text x="1003" y="610">Guernsey</text><text x="1413" y="234">Danmark</text><text x="1279" y="466">Nederland</text><text x="1451" y="524">Deutschland</text><text x="1255" y="538">België /</text><text x="1255" y="560">Belgique /</text><text x="1255" y="583">Belgien</text><text x="1620" y="600">Česko</text><text x="1926" y="74">Eesti</text><text x="1915" y="195">Latvija</text><text x="1915" y="296">Lietuva</text><text x="1745" y="478">Polska</text><text x="2043" y="383">Беларусь</text><text x="1762" y="657">Slovensko</text>
              </g>
              <g class="lbl lbl-city">
                <text x="981" y="238">Edinburgh</text><text x="887" y="319">Belfast</text><text x="1037" y="365">Leeds</text><text x="961" y="396">Manchester</text><text x="1079" y="402">Sheffield</text><text x="1079" y="453">Birmingham</text><text x="980" y="496">Cardiff</text><text x="1085" y="492">London</text><text x="1173" y="554">Lille</text><text x="1171" y="633">Paris</text><text x="1032" y="674">Rennes</text><text x="1498" y="153">Göteborg</text><text x="1519" y="282">København</text><text x="1313" y="398">Groningen</text><text x="1431" y="405">Hamburg</text><text x="1586" y="411">Szczecin</text><text x="1546" y="435">Berlin</text><text x="1487" y="485">Magdeburg</text><text x="1321" y="510">Düsseldorf</text><text x="1386" y="549">Frankfurt</text><text x="1386" y="570">am Main</text><text x="1558" y="544">Dresden</text><text x="1468" y="605">Nürnberg</text><text x="1298" y="624">Luxembourg</text><text x="1403" y="664">Stuttgart</text><text x="1577" y="664">Linz</text><text x="1648" y="666">Wien</text><text x="1706" y="50">Stockholm</text><text x="1934" y="41">Tallinn</text><text x="1790" y="312">Калининград</text><text x="1952" y="340">Vilnius</text><text x="1726" y="358">Gdańsk</text><text x="1903" y="372">Гродна</text><text x="1704" y="404">Bydgoszcz</text><text x="1921" y="416">Białystok</text><text x="1667" y="445">Poznań</text><text x="1806" y="451">Warszawa</text><text x="1898" y="487">Брэст</text><text x="1671" y="540">Wrocław</text><text x="1860" y="533">Lublin</text><text x="1953" y="536">Луцьк</text><text x="1770" y="572">Kraków</text><text x="2025" y="574">Житомир</text><text x="1910" y="609">Львів</text><text x="1656" y="642">Brno</text>
              </g>

              <g class="pins">
                <a href="#"><circle class="done" cx="1017" cy="170" r="12"/></a>
                <a href="#"><circle class="done" cx="940" cy="246" r="12"/></a>
                <a href="#"><circle class="live" cx="982" cy="242" r="12"/></a>
                <a href="#"><circle class="done" cx="1037" cy="371" r="12"/></a>
                <a href="#"><circle class="live" cx="1013" cy="389" r="12"/></a>
                <a href="#"><circle class="lead-stage" cx="956" cy="494" r="12"/></a>
                <a href="#"><circle class="legals" cx="968" cy="499" r="12"/></a>
                <a href="#"><circle class="live" cx="982" cy="502" r="12"/></a>
                <a href="#"><circle class="lead-stage" cx="1085" cy="500" r="12"/></a>
              </g>
            </svg>
            <div class="zoom"><button>+</button><button>−</button></div>
            <div class="credit">
              <svg viewBox="0 0 18 12"><path fill="#4a4fe0" d="M0 0h18v6H0z"/><path fill="#c9a06c" d="M0 6h18v6H0z"/></svg>
              <a href="#">Leaflet</a> | © <a href="#">OpenStreetMap</a> contributors
            </div>
          </div>

          <section class="sites">
            <h2>Pinned sites</h2>
            <a href="#"><i class="dot lead-stage"></i><span class="site"><b>Kingsway Island</b><small>Identified</small></span><span class="price">£4.2m</span></a>
            <a href="#"><i class="dot lead-stage"></i><span class="site"><b>Swansea Maritime Quarter</b><small>Identified</small></span><span class="price">£2.75m</span></a>
            <a href="#"><i class="dot live"></i><span class="site"><b>Cardiff Dockside</b><small>Initial contact</small></span><span class="price">£6.1m</span></a>
            <a href="#"><i class="dot live"></i><span class="site"><b>Leith Yard</b><small>Heads of Terms</small></span><span class="price">£5.4m</span></a>
            <a href="#"><i class="dot live"></i><span class="site"><b>Canalside Wharf</b><small>Exclusivity / DD</small></span><span class="price">£8.9m</span></a>
            <a href="#"><i class="dot legals"></i><span class="site"><b>Bridgend Trade Park</b><small>Legals</small></span><span class="price">£3.3m</span></a>
            <a href="#"><i class="dot done"></i><span class="site"><b>Clydebank Quay</b><small>Exchanged</small></span><span class="price">£7.6m</span></a>
            <a href="#"><i class="dot done"></i><span class="site"><b>Rivergate Plaza</b><small>Completed</small></span><span class="price">£11.5m</span></a>
            <a href="#"><i class="dot done"></i><span class="site"><b>Aberdeen Harbour</b><small>Completed</small></span><span class="price">£9.25m</span></a>
          </section>
        </div>
      </main>
    </div>
  </div>

  <button class="dev-badge">
    <svg viewBox="0 0 56 56">
      <defs>
        <linearGradient id="n1" x1="34" y1="34" x2="38" y2="40" gradientUnits="userSpaceOnUse"><stop stop-color="#fff"/><stop offset="1" stop-color="#fff" stop-opacity="0"/></linearGradient>
        <linearGradient id="n2" x1="36" y1="19" x2="36" y2="32" gradientUnits="userSpaceOnUse"><stop stop-color="#fff"/><stop offset="1" stop-color="#fff" stop-opacity="0"/></linearGradient>
      </defs>
      <path d="M21 37V20l15 19" fill="none" stroke="url(#n1)" stroke-width="3"/>
      <path d="M35 19v13" stroke="url(#n2)" stroke-width="3"/>
    </svg>
  </button>
</body>
</html>
```
FILE: styles.css
```css
* { margin: 0; padding: 0; box-sizing: border-box; }
body {
  font-family: Inter, "Liberation Sans", sans-serif;
  font-size: 20px;
  color: #0c0d10;
  background-color: #f4f4f2;
}
a { color: inherit; text-decoration: none; }
button {
  font: inherit;
  color: inherit;
  background: none;
  border: none;
  cursor: pointer;
}
.sprite { display: none; }
.icon {
  width: 24px;
  height: 24px;
  flex: none;
  fill: none;
  stroke: currentColor;
  stroke-width: 1.75;
  stroke-linecap: round;
  stroke-linejoin: round;
}
.icon-sm { width: 22px; height: 22px; color: #85868c; }

.layout { display: flex; min-height: 100vh; }

/* sidebar */
.sidebar {
  width: 384px;
  height: 100vh;
  position: sticky;
  top: 0;
  flex: none;
  display: flex;
  flex-direction: column;
  background-color: #fff;
  border-right: 1px solid #e3e3e1;
}
.brand {
  display: flex;
  align-items: center;
  gap: 15px;
  padding: 24px 30px 18px;
}
.brand-logo { width: 48px; height: 48px; flex: none; fill: #4f46e5; }
.brand-logo path { fill: #fff; }
.brand-name {
  font-family: "Liberation Serif", serif;
  font-size: 27px;
  font-weight: 700;
  line-height: 26px;
}
.brand-sub {
  font-size: 16px;
  font-weight: 500;
  line-height: 22px;
  letter-spacing: 2px;
  text-transform: uppercase;
  white-space: nowrap;
  color: #686f78;
}
.scope {
  display: flex;
  align-items: center;
  gap: 12px;
  height: 72px;
  margin: 0 18px;
  padding: 0 16px;
  border: 1px solid #e3e3e1;
  border-radius: 12px;
  text-align: left;
  color: #4f46e5;
}
.scope-text { flex: 1; display: flex; flex-direction: column; }
.scope-label { font-size: 15px; line-height: 22px; color: #85868c; }
.scope-value { font-size: 19px; font-weight: 500; line-height: 28px; color: #0c0d10; }
.hide-menu {
  display: flex;
  align-items: center;
  gap: 12px;
  height: 36px;
  margin: 20px 18px 0;
  padding: 0 18px;
  font-size: 17px;
  color: #85868c;
}
.nav { flex: 1; padding: 23px 18px 0; }
.nav-group { display: flex; flex-direction: column; gap: 3px; margin-bottom: 31px; }
.nav h2 {
  margin-bottom: 6px;
  padding-left: 18px;
  font-size: 16px;
  font-weight: 500;
  line-height: 24px;
  letter-spacing: 3px;
  text-transform: uppercase;
  color: #686f78;
}
.nav a {
  display: flex;
  align-items: center;
  gap: 17px;
  height: 54px;
  padding: 0 18px;
  border-radius: 12px;
  color: #1f2126;
}
.nav .icon { width: 28px; height: 28px; color: #85868c; }
.nav a.active { background-color: #eef0fe; color: #4338ca; }
.nav a.active .icon { color: #4f46e5; }
.side-footer {
  padding: 18px 30px 16px;
  border-top: 1px solid #e3e3e1;
  font-size: 17px;
  line-height: 37px;
  color: #686f78;
}
.stat { display: flex; justify-content: space-between; }
.stat b { font-family: "Liberation Mono", monospace; font-size: 15px; color: #0c0d10; }
.places { display: flex; align-items: center; gap: 6px; white-space: nowrap; }
.places i { width: 8px; height: 8px; border-radius: 4px; background-color: #686f78; }
.dev-badge {
  position: fixed;
  left: 28px;
  bottom: 29px;
  width: 57px;
  height: 57px;
  border: 2px solid #111;
  border-radius: 50%;
  background-color: #2f2c30;
  box-shadow: inset 0 0 0 1px #55565a, 0 14px 28px rgba(0, 0, 0, .06);
}
.dev-badge svg { display: block; width: 100%; }

/* top bar */
.content { flex: 1; min-width: 0; }
.topbar {
  display: flex;
  align-items: center;
  justify-content: space-between;
  height: 96px;
  padding: 0 36px;
  border-bottom: 1px solid #e3e3e1;
}
.search {
  display: flex;
  align-items: center;
  gap: 18px;
  width: 864px;
  height: 60px;
  padding: 0 18px;
  border: 1px solid #e3e3e1;
  border-radius: 12px;
  background-color: #fff;
  color: #85868c;
}
.search input {
  flex: 1;
  border: none;
  outline: none;
  font: inherit;
  color: #0c0d10;
  background: none;
}
.search input::placeholder { color: #85868c; }
.search kbd {
  padding: 0 10px;
  border: 1px solid #e3e3e1;
  border-radius: 6px;
  background-color: #f4f4f2;
  font-family: "Liberation Mono", "DejaVu Sans Mono", monospace;
  font-size: 16px;
  line-height: 28px;
}
.top-right { display: flex; align-items: center; }
.ask {
  display: flex;
  align-items: center;
  gap: 10px;
  height: 45px;
  padding: 0 15px;
  border: 1px solid #e3e3e1;
  border-radius: 12px;
  background-color: #fff;
  box-shadow: 0 2px 3px rgba(0, 0, 0, .08);
  font-size: 17px;
  font-weight: 500;
  color: #2c2e33;
}
.ask .icon { color: #4f46e5; }
.bell {
  display: flex;
  align-items: center;
  position: relative;
  width: 60px;
  height: 54px;
  padding-left: 18px;
  margin-left: 6px;
  color: #2c2e33;
}
.count {
  position: absolute;
  top: 8px;
  right: 11px;
  width: 27px;
  border-radius: 13px;
  background-color: #8a5030;
  font-family: "Liberation Mono", monospace;
  font-size: 15px;
  font-weight: 700;
  line-height: 25px;
  color: #fff;
}
.account { display: flex; align-items: center; gap: 15px; padding: 0 8px 0 16px; }
.who { display: flex; flex-direction: column; text-align: right; }
.who-name { font-weight: 500; line-height: 24px; }
.who-role { font-size: 16px; line-height: 22px; letter-spacing: 2px; color: #686f78; }
.avatar {
  width: 54px;
  height: 54px;
  border-radius: 50%;
  background-color: #4338ca;
  font-family: "Liberation Mono", monospace;
  font-size: 15px;
  font-weight: 700;
  line-height: 54px;
  color: #fff;
}

/* tabs */
.tabs { height: 64px; border-bottom: 1px solid #e3e3e1; background-color: #fcfcfa; }
.tabs-inner, .page { width: 100%; max-width: 2640px; margin: 0 auto; padding: 0 48px; }
.tabs-inner { display: flex; gap: 8px; height: 100%; }
.tabs a {
  display: flex;
  align-items: center;
  gap: 9px;
  padding: 0 21px;
  border-bottom: 3px solid transparent;
  font-weight: 500;
  color: #2c2e33;
}
.tabs a.active { border-color: #4f46e5; color: #4338ca; }

/* page */
.page { padding-top: 44px; padding-bottom: 48px; }
.page-head { padding-bottom: 35px; border-bottom: 1px solid #e3e3e1; }
.eyebrow {
  font-size: 16px;
  font-weight: 500;
  line-height: 24px;
  letter-spacing: 2px;
  text-transform: uppercase;
  color: #686f78;
}
h1 {
  margin: 13px 0 15px;
  font-family: "Liberation Serif", serif;
  font-size: 42px;
  font-weight: 700;
  line-height: 48px;
}
.lead { max-width: 984px; line-height: 36px; color: #686f78; }
.mapped { margin: 36px 0; line-height: 32px; color: #686f78; }
.mapped b { font-weight: 600; color: #0c0d10; }
.board {
  display: grid;
  grid-template-columns: minmax(0, 1fr) 480px;
  gap: 36px;
  align-items: start;
}

/* map */
.map {
  position: relative;
  height: 672px;
  overflow: hidden;
  border: 1px solid #e3e3e1;
  border-radius: 18px;
  background-color: #aad3df;
}
.map-canvas { display: block; width: 100%; height: 100%; }
.sea, .water { fill: #aad3df; }
.loch { fill: none; stroke: #aad3df; stroke-width: 2px; }
.land { fill: #eeeee0; }
.pasture { fill: #f0efe8; }
.forest { fill: #cfe3bd; }
.heath { fill: #d6d99f; opacity: .85; }
.fell { fill: #efeee6; opacity: .9; }
.farmland { fill: #f0eee8; opacity: .7; }
.region, .country, .marine { fill: none; stroke-linejoin: round; }
.region path, .country path, .marine path, .marine ellipse { vector-effect: non-scaling-stroke; }
.region { stroke: #b9adba; stroke-width: 1px; }
.country { stroke: #aa9ba8; stroke-width: 2px; }
.marine { stroke: #9b9cbf; stroke-width: 2px; }
.town { fill: #fff; stroke: #77757a; stroke-width: 1px; }
.capital { fill: #fff; stroke: #4a484c; stroke-width: 1px; }
.capital-core { fill: #4a484c; }
.lbl {
  font-family: "Noto Sans", sans-serif;
  text-anchor: middle;
  paint-order: stroke;
  stroke: rgba(255, 255, 255, .7);
  stroke-width: 3px;
  stroke-linejoin: round;
}
.lbl-city { font-size: 16px; fill: #3f3d42; }
.lbl-country { font-size: 18px; fill: #7b6b77; }
.lbl-region { font-size: 15px; font-style: italic; fill: #7b7082; }
.pins circle { stroke: #fff; stroke-width: 3px; }
.pins .lead-stage { fill: #8a8d94; }
.pins .live { fill: #4c6283; }
.pins .legals { fill: #ab7d4c; }
.pins .done { fill: #666b6b; }
.zoom {
  position: absolute;
  top: 15px;
  left: 15px;
  display: flex;
  flex-direction: column;
  width: 51px;
  border: 3px solid #7596bb;
  border-radius: 6px;
  background-color: #fff;
}
.zoom button {
  height: 45px;
  font-family: "Liberation Sans", sans-serif;
  font-size: 36px;
  line-height: 45px;
  color: #000;
}
.zoom button + button { border-top: 1px solid #ccc; }
.credit {
  position: absolute;
  right: 0;
  bottom: 0;
  padding: 0 8px;
  background-color: rgba(255, 255, 255, .8);
  font-family: "Liberation Sans", sans-serif;
  font-size: 18px;
  line-height: 26px;
  color: #333;
}
.credit svg { width: 18px; height: 12px; }
.credit a { color: #2a7ab0; }

/* pinned sites */
.sites {
  overflow: hidden;
  border: 1px solid #e3e3e1;
  border-radius: 18px;
  background-color: #fff;
}
.sites h2 {
  padding: 0 24px;
  font-size: 16px;
  font-weight: 500;
  line-height: 53px;
  letter-spacing: 3px;
  text-transform: uppercase;
  color: #686f78;
}
.sites a {
  display: flex;
  align-items: center;
  gap: 18px;
  padding: 18px 24px;
  border-top: 1px solid #e3e3e1;
}
.dot { width: 12px; height: 12px; border-radius: 50%; }
.dot.lead-stage { background-color: #8a8d94; }
.dot.live { background-color: #4c6283; }
.dot.legals { background-color: #ab7d4c; }
.dot.done { background-color: #666b6b; }
.site { flex: 1; display: flex; flex-direction: column; }
.site b { font-size: 20px; font-weight: 500; line-height: 1.55; }
.site small { font-size: 16px; line-height: 1.45; color: #686f78; }
.price { font-family: "Liberation Mono", monospace; font-size: 15px; color: #85868c; }
```
